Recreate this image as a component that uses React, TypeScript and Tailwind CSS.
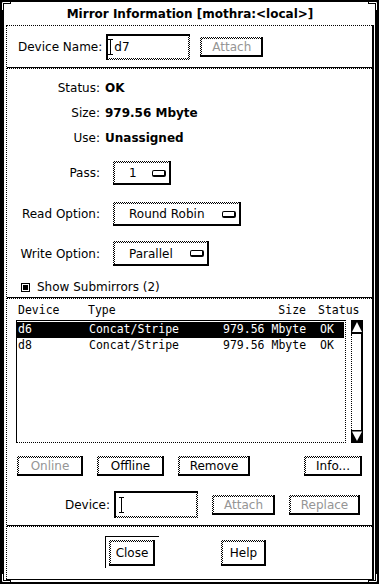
import React from 'react';

// 50% stipple used for the light side of the Motif bevels
const stipple = 'bg-[repeating-conic-gradient(#000_0_25%,#fff_0_50%)] bg-[length:2px_2px]';

interface ButtonProps {
  label: string;
  className?: string;
  disabled?: boolean;
}

const Button: React.FC<ButtonProps> = ({ label, className = '', disabled = false }) => (
  <div className={`flex pt-[2px] pl-[2px] border-r-2 border-b-2 border-black ${stipple} ${className}`}>
    <div className={`flex-1 flex items-center justify-center bg-white leading-none ${disabled ? 'text-[#959595]' : ''}`}>
      {label}
    </div>
  </div>
);

const OptionMenu: React.FC<{ label: string; className?: string }> = ({ label, className = '' }) => (
  <div className={`flex pt-[2px] pl-[2px] border-r-2 border-b-2 border-black ${stipple} ${className}`}>
    <div className="flex-1 flex items-center bg-white pl-[14px] pr-[3px] leading-none">
      <span>{label}</span>
      <div className="ml-auto w-[14px] h-[7px] border border-black border-r-2 border-b-2 rounded-[2px]" />
    </div>
  </div>
);

const IBeam: React.FC<{ className?: string }> = ({ className = '' }) => (
  <svg width="5" height="16" viewBox="0 0 5 16" className={className}>
    <path d="M0 0.5H5M2.5 0.5V15.5M0 15.5H5" stroke="black" strokeWidth="1" fill="none" />
  </svg>
);

const TextField: React.FC<{ text?: string; className?: string; cursorClass?: string }> = ({ text, className = '', cursorClass = '' }) => (
  <div className={`flex border-t-2 border-l-2 border-black pr-[2px] pb-[2px] ${stipple} ${className}`}>
    <div className="flex-1 flex items-center bg-white leading-none">
      <IBeam className={cursorClass} />
      {text && <span className="ml-[1px]">{text}</span>}
    </div>
  </div>
);

const Separator: React.FC = () => (
  <div>
    <div className="border-t border-black" />
    <div className="border-t border-dotted border-black" />
  </div>
);

const Corner: React.FC<{ className: string; rotate: string }> = ({ className, rotate }) => (
  <svg width="11" height="11" viewBox="0 0 11 11" className={`absolute ${className} ${rotate}`}>
    <path d="M0 0H11V4H4V11H0Z" fill="black" />
    <path d="M2.5 10V2.5H10" stroke="white" strokeWidth="1" fill="none" />
  </svg>
);

const rows = [
  { dev: 'd6', type: 'Concat/Stripe', size: '979.56 Mbyte', status: 'OK', selected: true },
  { dev: 'd8', type: 'Concat/Stripe', size: '979.56 Mbyte', status: 'OK', selected: false },
];

export default function App() {
  return (
    <div className="w-[379px] h-[584px] bg-white relative flex flex-col border-t-2 border-l-[4px] border-r-[4px] border-b-2 border-black pl-[2px] pr-[1px] pb-[2px] font-['DejaVu_Sans',sans-serif] text-[12px] text-black">
      <Corner className="-top-[2px] -left-[4px]" rotate="" />
      <Corner className="-top-[2px] -right-[4px]" rotate="rotate-90" />
      <Corner className="-bottom-[2px] -right-[4px]" rotate="rotate-180" />
      <Corner className="-bottom-[2px] -left-[4px]" rotate="-rotate-90" />

      {/* Title */}
      <div className="h-[23px] flex items-center justify-center font-bold leading-none">
        Mirror Information [mothra:&lt;local&gt;]
      </div>

      {/* Main panel */}
      <div className="flex-1 flex flex-col border-r-2 border-b border-black">
        <div className="flex-1 flex flex-col border-t border-l border-dotted border-black">
          {/* Device name */}
          <div className="h-[41px] flex items-center pl-[11px]">
            <span className="leading-none">Device Name:</span>
            <TextField text="d7" className="ml-[4px] w-[84px] h-[26px]" />
            <Button label="Attach" disabled className="ml-[10px] w-[63px] h-[20px]" />
          </div>
          <Separator />

          {/* Properties */}
          <div className="flex flex-col pt-[6px] pb-[2px] leading-none">
            <div className="flex items-center h-[25px]">
              <span className="w-[93px] text-right">Status:</span>
              <span className="ml-[5px] font-bold">OK</span>
            </div>
            <div className="flex items-center h-[25px]">
              <span className="w-[93px] text-right">Size:</span>
              <span className="ml-[5px] font-bold">979.56 Mbyte</span>
            </div>
            <div className="flex items-center h-[25px]">
              <span className="w-[93px] text-right">Use:</span>
              <span className="ml-[5px] font-bold">Unassigned</span>
            </div>
            <div className="flex items-center mt-[11px] h-[24px]">
              <span className="w-[93px] text-right">Pass:</span>
              <OptionMenu label="1" className="ml-[13px] w-[58px] h-[24px]" />
            </div>
            <div className="flex items-center mt-[17px] h-[24px]">
              <span className="w-[93px] text-right">Read Option:</span>
              <OptionMenu label="Round Robin" className="ml-[13px] w-[128px] h-[24px]" />
            </div>
            <div className="flex items-center mt-[15px] h-[25px]">
              <span className="w-[93px] text-right">Write Option:</span>
              <OptionMenu label="Parallel" className="ml-[13px] w-[96px] h-[25px]" />
            </div>
            <div className="flex items-center mt-[13px] h-[16px] pl-[14px]">
              <div className="w-[9px] h-[9px] border border-black p-[1px]">
                <div className="w-full h-full bg-black" />
              </div>
              <span className="ml-[7px]">Show Submirrors (2)</span>
            </div>
          </div>
          <Separator />

          {/* Submirrors */}
          <div className="flex flex-col pt-[3px] pb-[7px]">
            <div className="flex items-center h-[18px] pl-[11px] font-['DejaVu_Sans_Mono',monospace] text-[11.5px] leading-none">
              <span className="w-[70px]">Device</span>
              <span className="w-[135px]">Type</span>
              <span className="w-[83px] text-right">Size</span>
              <span className="ml-[12px]">Status</span>
            </div>
            <div className="flex ml-[9px]">
              <div className="w-[330px] h-[123px] border-r border-b border-dotted border-black">
                <div className="h-full border-t border-l border-black pt-[1px] font-['DejaVu_Sans_Mono',monospace] text-[11.5px] leading-none">
                  {rows.map((r) => (
                    <div
                      key={r.dev}
                      className={`flex items-center h-[16px] pl-[1px] mr-[1px] ${r.selected ? 'bg-black text-white' : ''}`}
                    >
                      <span className="w-[71px]">{r.dev}</span>
                      <span className="w-[134px]">{r.type}</span>
                      <span className="w-[97px]">{r.size}</span>
                      <span>{r.status}</span>
                    </div>
                  ))}
                </div>
              </div>
              {/* Scrollbar */}
              <div className="ml-[5px] w-[12px] h-[123px] flex flex-col">
                <svg width="12" height="14" viewBox="0 0 12 14">
                  <rect width="12" height="14" fill="black" />
                  <path d="M6 2L11 12H1Z" fill="white" />
                </svg>
                <div className="flex-1 flex border-r-2 border-black">
                  <div className="flex-1 border-l border-dotted border-black" />
                </div>
                <svg width="12" height="13" viewBox="0 0 12 13">
                  <rect width="12" height="13" fill="black" />
                  <path d="M6 11L11 1.5H1Z" fill="white" />
                </svg>
              </div>
            </div>

            <div className="flex items-center mt-[13px] h-[20px]">
              <Button label="Online" disabled className="ml-[10px] w-[66px] h-[20px]" />
              <Button label="Offline" className="ml-[14px] w-[67px] h-[20px]" />
              <Button label="Remove" className="ml-[14px] w-[72px] h-[20px]" />
              <Button label="Info..." className="ml-[54px] w-[58px] h-[20px]" />
            </div>

            <div className="flex items-center mt-[15px] h-[27px]">
              <span className="w-[103px] text-right leading-none">Device:</span>
              <TextField className="ml-[4px] w-[84px] h-[27px]" cursorClass="ml-[3px]" />
              <Button label="Attach" disabled className="ml-[14px] w-[63px] h-[20px]" />
              <Button label="Replace" disabled className="ml-[14px] w-[71px] h-[20px]" />
            </div>
          </div>
          <Separator />

          {/* Dialog actions */}
          <div className="flex items-start pt-[9px] pl-[98px]">
            <div className="border-t border-l border-black pt-[3px] pl-[3px] pr-[4px] pb-[2px]">
              <Button label="Close" className="w-[46px] h-[26px]" />
            </div>
            <Button label="Help" className="ml-[62px] mt-[4px] w-[45px] h-[26px]" />
          </div>
        </div>
      </div>
    </div>
  );
}
